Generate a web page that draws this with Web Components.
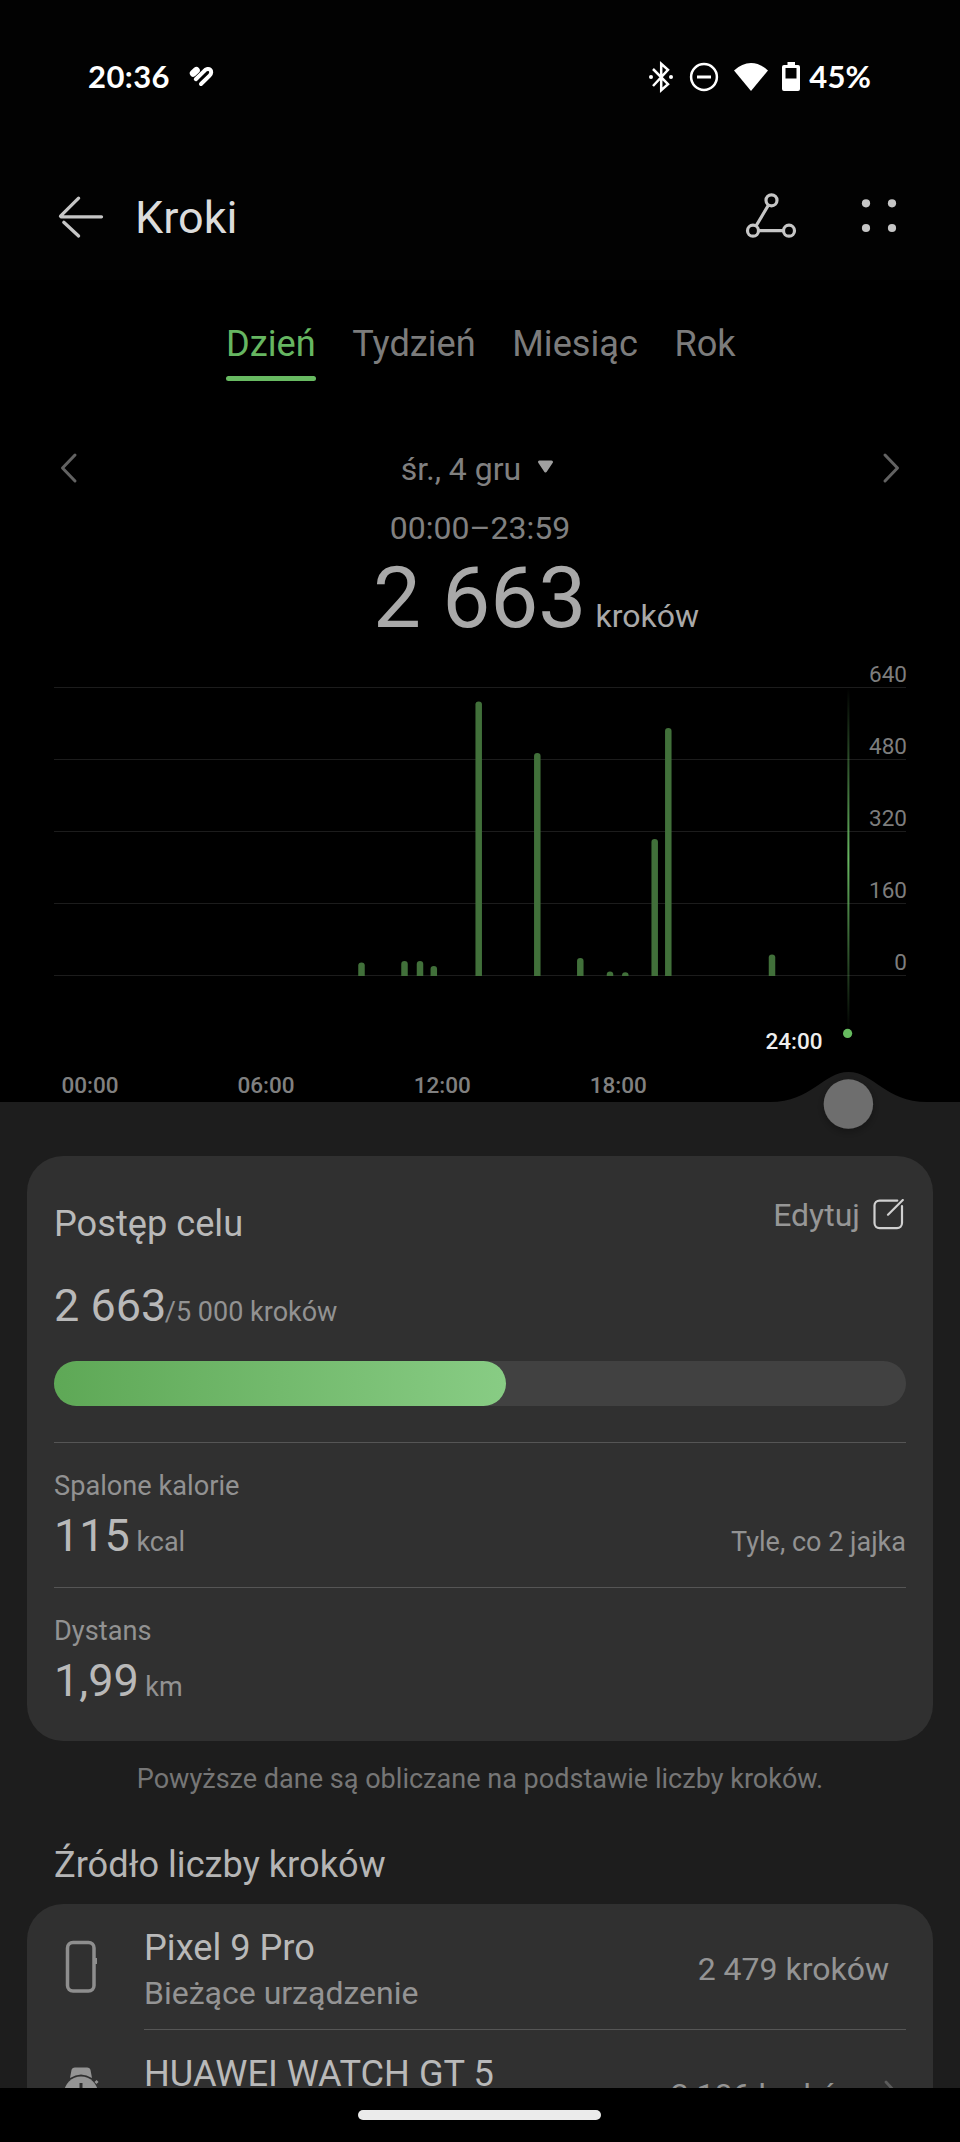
<!DOCTYPE html>
<html lang="pl">
<head>
<meta charset="utf-8">
<title>Kroki</title>
<style>
html,body{margin:0;padding:0;background:#000}
body{width:960px;height:2142px;overflow:hidden;font-family:Roboto,"Liberation Sans",sans-serif}
</style>
</head>
<body>
<steps-app></steps-app>
<script>
const define=(name,html,setup)=>customElements.define(name,class extends HTMLElement{
  connectedCallback(){
    if(this.shadowRoot)return;
    const t=document.createElement('template');
    t.innerHTML=html;
    this.attachShadow({mode:'open'}).append(t.content.cloneNode(true));
    if(setup)setup(this,this.shadowRoot);
  }
});

define('status-bar',`<style>
:host{display:flex;box-sizing:border-box;height:154px;padding:57px 89px 57px 88px;align-items:center;justify-content:space-between;background:#020202;color:#fff;font:700 31px/38px Lato,"Open Sans",sans-serif}
div{display:flex;align-items:center}
span{padding-bottom:2px}
svg{display:block}
.t{margin-right:18px;letter-spacing:.4px}
.p{margin-left:8px;letter-spacing:.1px}
</style>
<div><span class="t">20:36</span>
<svg width="26" height="24" viewBox="188 66 26 24" fill="none" stroke="#fff" stroke-linecap="round" stroke-linejoin="round"><path d="M193.2 74.3l3.2-3" stroke-width="6.8"/><path d="M195.8 80.2L203.600 72.600C209 66.500 213.800 72.500 209.600 76.600L201 85" stroke-width="4"/></svg></div>
<div><svg width="152" height="32" viewBox="648 61 152 32" fill="none" stroke="#fff"><path d="M652 69l15 15.200-6.800 6V63.800l6.800 6L652 86" stroke-width="2.500"/><circle cx="650" cy="77" r="2" fill="#fff" stroke="none"/><circle cx="670" cy="77" r="2" fill="#fff" stroke="none"/><circle cx="703" cy="77" r="12.900" stroke-width="2.500"/><path d="M696 77h14" stroke-width="3"/><path d="M733 70.500Q741 63 750 63t17 7.500L750 91z" fill="#fff" stroke="none"/><path fill-rule="evenodd" d="M786.500 62h7.500v3h3a2 2 0 0 1 2 2v22a2 2 0 0 1-2 2h-14a2 2 0 0 1-2-2V67a2 2 0 0 1 2-2h3.500zM784.500 68v10.500h11V68z" fill="#fff" stroke="none"/></svg><span class="p">45%</span></div>`);

define('app-header',`<style>
:host{display:flex;box-sizing:border-box;height:126px;padding:0 62px 0 57px;align-items:center;background:#020202;color:#dcdcdc;font-size:45px;line-height:60px}
h1{font:inherit;margin:1px auto 0 30px}
svg{display:block;fill:none;stroke:#c6c6c6}
</style>
<svg width="48" height="44" viewBox="57 194 48 44" stroke-width="3.300" stroke-linecap="round"><path d="M61 215.800h40.500M78.600 197.200L60.500 215.200M63.800 221.300L78.600 235"/></svg>
<h1><slot></slot></h1>
<svg width="154" height="48" viewBox="744 193 154 48" stroke-width="3.200"><circle cx="771.500" cy="200.300" r="5.500"/><circle cx="753" cy="230.700" r="5.500"/><circle cx="789" cy="230.700" r="5.500"/><path d="M768.500 205l-12.500 21M758.500 230.700h25"/><g fill="#c6c6c6" stroke="none"><circle cx="866" cy="203.300" r="4.100"/><circle cx="892" cy="203.300" r="4.100"/><circle cx="866" cy="228" r="4.100"/><circle cx="892" cy="228" r="4.100"/></g></svg>`);

define('period-tab',`<style>
:host{display:block;height:61px;color:#7c7c7c;font-size:36.200px;line-height:48px;white-space:nowrap}
:host([active]){color:#66b661}
i{display:none;height:5px;margin-top:8px;border-radius:2.500px;background:#68ba62}
:host([active]) i{display:block}
</style><slot></slot><i></i>`);

define('period-tabs',`<style>
:host{display:flex;box-sizing:border-box;height:112px;padding:40px 0 0 226px;gap:36.500px}
</style><slot></slot>`);

define('day-summary',`<style>
:host{display:block;height:280px;padding-top:52px;box-sizing:border-box;color:#808080;font-size:32px}
.d{display:flex;box-sizing:border-box;height:48px;padding:0 59px;justify-content:space-between;align-items:center}
.c{display:flex;align-items:center;gap:16px;line-height:48px;padding:2px 5px 0 0}
.c svg{margin-top:-4px}
.r{text-align:center;line-height:48px;margin-top:12px}
.n{display:flex;align-items:baseline;padding-left:373px;margin-top:3px;color:#a9a9a9;line-height:86px}
b{font-weight:400;font-size:85.500px}
.n span{margin-left:9px}
svg{display:block}
</style>
<div class="d"><svg width="19" height="32" viewBox="0 0 19 32" fill="none" stroke="#626262" stroke-width="3" stroke-linecap="round" stroke-linejoin="round"><path d="M16 3L3.500 16 16 29"/></svg>
<div class="c"><span>śr., 4 gru</span><svg width="17" height="14" viewBox="0 0 17 14"><path d="M2.500 2h12L8.500 11z" fill="#a0a0a0" stroke="#a0a0a0" stroke-width="3" stroke-linejoin="round"/></svg></div>
<svg width="19" height="32" viewBox="0 0 19 32" fill="none" stroke="#626262" stroke-width="3" stroke-linecap="round" stroke-linejoin="round"><path d="M3 3l12.500 13L3 29"/></svg></div>
<div class="r">00:00–23:59</div>
<div class="n"><b>2 663</b><span>kroków</span></div>`);

define('steps-chart',`<style>
:host{display:block;height:484px}
svg{display:block;overflow:visible;font-size:22.500px;fill:#7d7d7d}
</style>
<svg width="960" height="484" viewBox="0 672 960 484">
<defs><linearGradient id="c" x1="0" y1="688" x2="0" y2="1030" gradientUnits="userSpaceOnUse"><stop stop-color="#68b862" stop-opacity="0"/><stop offset=".5" stop-color="#68b862"/><stop offset="1" stop-color="#68b862" stop-opacity="0"/></linearGradient>
<filter id="s" x="-40%" y="-40%" width="180%" height="180%"><feDropShadow dx="0" dy="3" stdDeviation="4" flood-color="#000" flood-opacity=".3"/></filter></defs>
<g id="grid"></g><g id="bars" fill="#41703a"></g>
<path d="M0 1102H770C812 1102 823 1072 848.500 1072S885 1102 927 1102H960V1156H0z" fill="#1d1d1d"/>
<rect x="847.400" y="688" width="2" height="342" fill="url(#c)"/>
<circle cx="847.600" cy="1033.400" r="4.600" fill="#66bb5f"/>
<text x="822.500" y="1048.500" text-anchor="end" fill="#eeeeee" font-weight="500">24:00</text>
<g id="hours" font-weight="500" text-anchor="middle" fill="#808080"></g>
<circle cx="848.400" cy="1104" r="24.700" fill="#6e6e6e" filter="url(#s)"/>
</svg>`,(host,root)=>{
  root.getElementById('grid').innerHTML=[640,480,320,160,0].map((v,i)=>{
    const y=687+Math.round(i*72.1);
    return `<rect x="54" y="${y}" width="852" height="1" fill="#1c1c1c"/><text x="907" y="${y-5}" text-anchor="end">${v}</text>`}).join('');
  root.getElementById('bars').innerHTML=[[361.5,962.5],[404.5,961],[420,961],[433.800,966],[478.700,701.5],[537.300,753],[580.300,958],[610,971.5],[625.300,972.3],[654.700,839],[668.300,728],[772,954.5]]
    .map(([x,y])=>{const r=Math.min(3,976-y);return `<path d="M${x-3.25} 976V${y+r}Q${x-3.25} ${y} ${x} ${y}T${x+3.25} ${y+r}V976z"/>`}).join('');
  root.getElementById('hours').innerHTML=['00:00','06:00','12:00','18:00'].map((t,i)=>`<text x="${90+i*176.100}" y="1092.500">${t}</text>`).join('');
});

define('goal-card',`<style>
:host{display:block;box-sizing:border-box;height:585px;margin:0 27px;padding:0 27px;border-radius:36px;background:#303030;color:#b9b9b9}
.h{display:flex;justify-content:space-between;height:104px}
h2{margin:56px 0 0;font-weight:400;font-size:36.200px;line-height:24px}
.e{display:flex;gap:13px;height:30px;margin:43px 2px 0 0;align-items:center;color:#969696;font-size:32px;line-height:34px}
.e span{padding-top:2px}
.g{display:flex;align-items:baseline;height:101px;font-size:45px;line-height:92px}
small{font-size:27px;color:#929292;margin-left:-1.500px}
.t{height:45px;border-radius:23px;background:#414141}
.f{width:452px;height:45px;border-radius:23px;background:linear-gradient(90deg,#5ea856,#88cc84)}
</style>
<div class="h"><h2>Postęp celu</h2><div class="e"><span>Edytuj</span><svg width="31" height="31" viewBox="0 0 31 31" fill="none" stroke="#d0d0d0" stroke-width="2.200" stroke-linecap="round"><path d="M24.300 1.600H6.500A5 5 0 0 0 1.500 6.600v17.500a5 5 0 0 0 5 5h17.500a5 5 0 0 0 5-5V7M15 15.700L29.800 1"/></svg></div></div>
<div class="g"><span>2 663</span><small>/5 000 kroków</small></div>
<div class="t"><div class="f"></div></div>
<slot></slot>`);

define('stat-row',`<style>
:host{display:block;box-sizing:border-box;height:145px;border-top:1px solid #555;padding-top:27px;color:#b9b9b9;font-size:45px}
.l{font-size:27.200px;line-height:32px;color:#929292}
.v{display:flex;align-items:baseline;line-height:50px;margin-top:9px}
small{font-size:27px;color:#929292;margin-left:6.500px}
small:last-child{margin-left:auto}
</style>
<div class="l"><slot name="label"></slot></div>
<div class="v"><span><slot></slot></span><small><slot name="unit"></slot></small><small><slot name="note"></slot></small></div>`);

define('source-row',`<style>
:host{display:flex;box-sizing:border-box;height:126px}
.i{width:90px;flex:none;display:flex;align-items:center;height:126px}
.b{flex:1;display:flex;box-sizing:border-box;align-items:center;border-bottom:1px solid #555;height:126px;padding-top:4px}
.n{color:#b9b9b9;font-size:36.200px;line-height:48px}
.s{min-height:42px;color:#949494;font-size:32px;line-height:42px}
.v{margin-left:auto;color:#949494;font-size:32px;line-height:42px;margin-right:17px}
:host([link]) .v{margin-right:0}
.chev{display:none;margin:0 6px 0 22px}
:host([link]) .chev{display:block}
</style>
<div class="i"><slot name="icon"></slot></div><div class="b"><div><div class="n"><slot></slot></div><div class="s"><slot name="sub"></slot></div></div><div class="v"><slot name="value"></slot></div><svg class="chev" width="16" height="30" viewBox="0 0 16 30" fill="none" stroke="#5c5c5c" stroke-width="2.800" stroke-linecap="round"><path d="M2 2l12 13L2 28"/></svg></div>`);

define('device-icon',`<style>:host{display:block;margin-left:11px}svg{display:block}</style><svg width="34" height="54" viewBox="0 0 34 54"></svg>`,(h,r)=>{
  r.querySelector('svg').innerHTML=h.getAttribute('kind')==='phone'
  ?'<rect x="2.500" y="2.500" width="26.500" height="48.500" rx="5.500" fill="none" stroke="#8e8e8e" stroke-width="3.500"/><path d="M31 18v6" stroke="#8e8e8e" stroke-width="2"/>'
  :'<path d="M5 12L6.500 4Q7 1.500 10 1.500h12Q25 1.500 25.500 4L27 12Q16 5 5 12z" fill="#949494"/><circle cx="16" cy="27.500" r="17" fill="#949494"/><path d="M16 17v11l6 4" fill="none" stroke="#303030" stroke-width="3"/><path d="M5 43l2 8h18l2-8q-11 6-22 0z" fill="#949494"/><path d="M30.500 15l2 2" stroke="#949494" stroke-width="3"/>';
});

define('source-list',`<style>
:host{display:block;box-sizing:border-box;height:184px;margin:0 27px;padding:0 27px;border-radius:36px 36px 0 0;background:#303030;overflow:hidden}
</style><slot></slot>`);

define('nav-bar',`<style>
:host{display:flex;box-sizing:border-box;height:54px;padding-right:1px;align-items:center;justify-content:center;background:#000}
i{width:243px;height:10px;border-radius:5px;background:#ebebeb}
</style><i></i>`);

define('steps-app',`<style>
:host{display:block;width:960px;height:2142px;overflow:hidden;background:#000}
main{background:#1d1d1d;height:932px;overflow:hidden}
p{margin:0;height:74px;text-align:center;color:#767676;font-size:27.050px;line-height:76px}
h2{margin:0 54px;height:89px;font-weight:400;font-size:36.200px;line-height:99px;color:#b5b5b5}
</style>
<status-bar></status-bar>
<app-header>Kroki</app-header>
<period-tabs><period-tab active>Dzień</period-tab><period-tab>Tydzień</period-tab><period-tab>Miesiąc</period-tab><period-tab>Rok</period-tab></period-tabs>
<day-summary></day-summary>
<steps-chart></steps-chart>
<main>
<goal-card>
<stat-row style="margin-top:36px"><span slot="label">Spalone kalorie</span>115<span slot="unit">kcal</span><span slot="note">Tyle, co 2 jajka</span></stat-row>
<stat-row><span slot="label">Dystans</span>1,99<span slot="unit">km</span></stat-row>
</goal-card>
<p>Powyższe dane są obliczane na podstawie liczby kroków.</p>
<h2>Źródło liczby kroków</h2>
<source-list>
<source-row><device-icon slot="icon" kind="phone"></device-icon>Pixel 9 Pro<span slot="sub">Bieżące urządzenie</span><span slot="value">2 479 kroków</span></source-row>
<source-row link><device-icon slot="icon" kind="watch"></device-icon>HUAWEI WATCH GT 5<span slot="value">2 186 kroków</span></source-row>
</source-list>
</main>
<nav-bar></nav-bar>`);
</script>
</body>
</html>
